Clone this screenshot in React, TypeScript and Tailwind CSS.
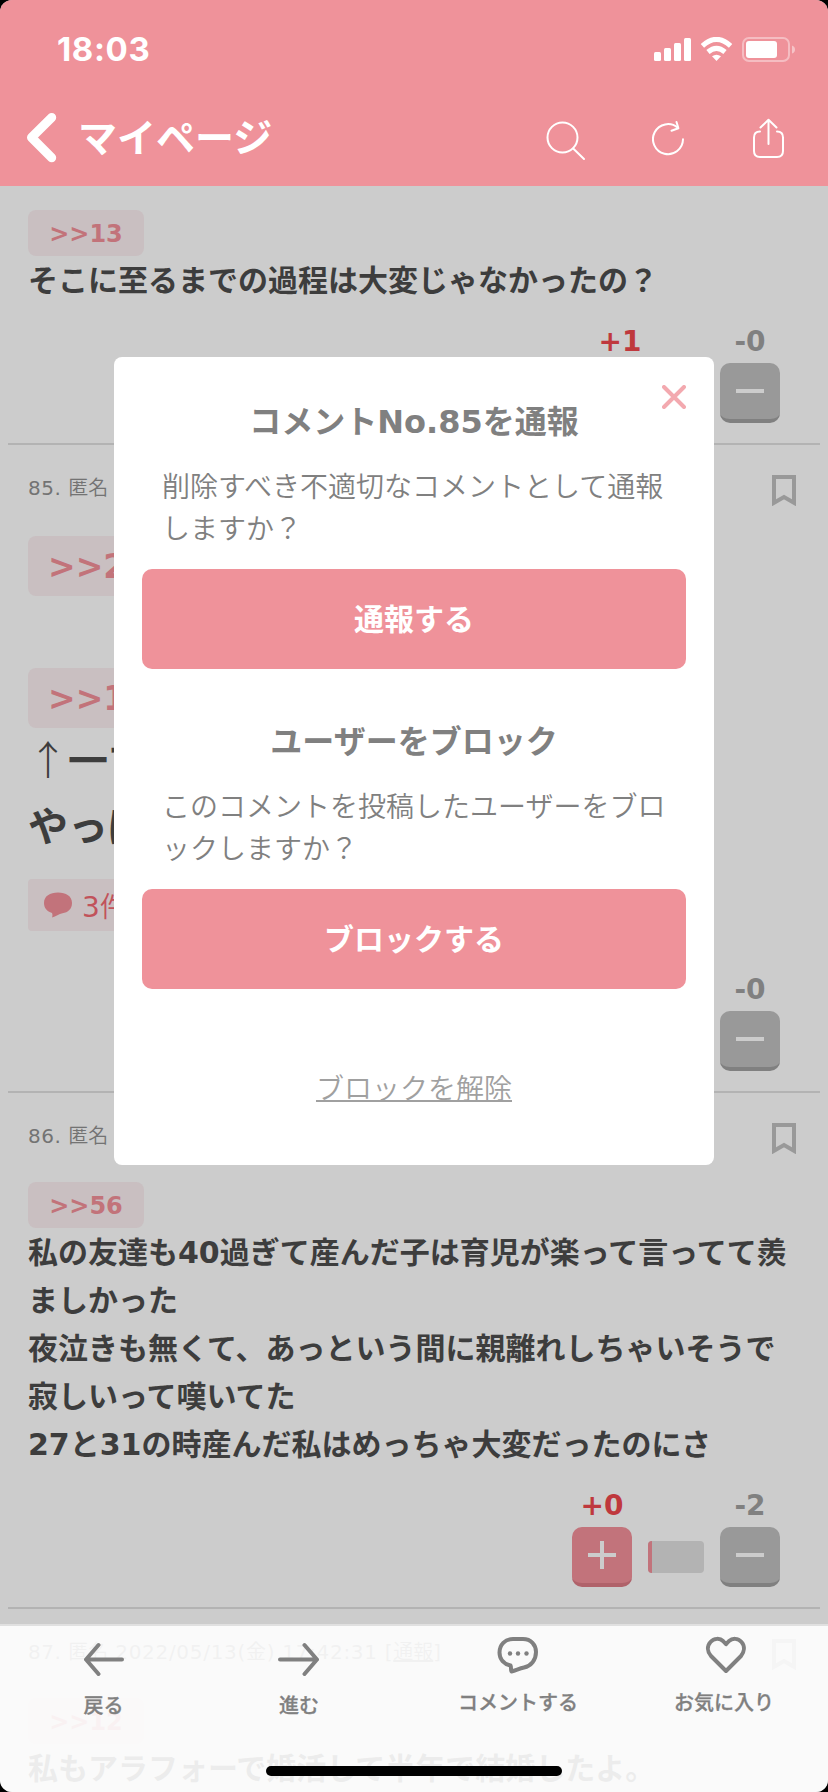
import type { ReactNode } from "react";

function StatusBar() {
  return (
    <div className="flex h-[98px] items-start justify-between pr-[33px] pl-[57px]">
      <span className="mt-[28px] font-['Inter'] text-[33px] leading-[42px] font-bold tracking-[0.6px]">18:03</span>
      <svg className="mt-[37px]" width="142" height="26" viewBox="652 37 142 26" fill="white">
        <rect x="653" y="52" width="7" height="9" rx="1.5" />
        <rect x="663" y="48" width="7" height="13" rx="1.5" />
        <rect x="673" y="43" width="7" height="18" rx="1.5" />
        <rect x="683" y="38" width="7" height="23" rx="1.5" />
        <g fill="none" stroke="white" strokeWidth="5">
          <path d="M701.4 45.8 Q715.500 33 729.600 45.800" />
          <path d="M707 52 Q715.500 44.700 724 52" />
        </g>
        <path d="M711 56.300 Q715.500 53 720 56.300 L715.500 61Z" />
        <rect x="742" y="38" width="46" height="23" rx="6" fill="none" stroke="white" strokeOpacity=".4" strokeWidth="2" />
        <rect x="745" y="41" width="31" height="17" rx="3" />
        <path d="M791 45.500 Q794 46.500 794 49.500 T791 53.500Z" fillOpacity=".45" />
      </svg>
    </div>
  );
}

function Header() {
  return (
    <header className="h-[186px] bg-[#ef929a] text-white">
      <StatusBar />
      <div className="flex h-[78px] items-center">
        <svg className="ml-[26px]" width="31" height="52" viewBox="26 111 31 52" fill="none" stroke="white" strokeWidth="9" strokeLinecap="round" strokeLinejoin="round">
          <path d="M51.700 117.500 L31.500 137.500 L51.700 157.700" />
        </svg>
        <h1 className="mt-[4px] ml-[21px] w-[440px] text-[39px] leading-[52px] font-bold">マイページ</h1>
        <svg className="mt-[6px] ml-[28px]" width="40" height="44" viewBox="546 118 40 44" fill="none" stroke="white" strokeWidth="2" strokeLinecap="round">
          <circle cx="562.500" cy="137.500" r="15" />
          <path d="M573.200 148.500 L584 159" />
        </svg>
        <svg className="mt-[6px] ml-[66px]" width="34" height="44" viewBox="652 118 34 44" fill="none" stroke="white" strokeWidth="2" strokeLinecap="round" strokeLinejoin="round">
          <path d="M683 139.300 A15 15 0 1 1 677.800 127.800" />
          <path d="M676.500 122 L678.400 128.300 L671.500 130.700" />
        </svg>
        <svg className="mt-[4px] ml-[66px]" width="34" height="44" viewBox="752 117 34 44" fill="none" stroke="white" strokeWidth="2" strokeLinecap="round" strokeLinejoin="round">
          <path d="M760 131.500 Q754 131.500 754 137.500 V151 Q754 157 760 157 H777 Q783 157 783 151 V137.500 Q783 131.500 777 131.500" />
          <path d="M768.500 144 V120 M760.500 127.500 L768.500 119.700 L776.500 127.500" />
        </svg>
      </div>
    </header>
  );
}

function Bookmark() {
  return (
    <svg className="mt-[30px]" width="24" height="31" viewBox="0 0 24 31" fill="none" stroke="#999" strokeWidth="4">
      <path d="M2 2 H22 V27.800 L12 22 L2 27.800 Z" />
    </svg>
  );
}

function Meta({ no, children }: { no: number; children?: ReactNode }) {
  return (
    <div className="flex h-[89px] items-start justify-between pr-[4px] font-normal">
      <span className="mt-[28px] text-[20px] leading-[30px] text-[#737373]">
        <span className="tracking-[0.5px]">{no}. </span>
        <span className="font-[350]">匿名</span>
        {children}
      </span>
      <Bookmark />
    </div>
  );
}

function Anchor({ children, large = false }: { children: ReactNode; large?: boolean }) {
  return (
    <div
      className={
        large
          ? "flex h-[60px] w-[170px] items-center rounded-[8px] bg-[#c9bfc1] pt-[2px] pl-[20px] text-[33px] font-bold text-[#c2737a]"
          : "flex h-[46px] w-[116px] items-center justify-center rounded-[8px] bg-[#c9bfc1] pt-[2px] text-[24px] font-bold text-[#c2737a]"
      }
    >
      {children}
    </div>
  );
}

type VotesProps = { plus: number; minus: number; narrow?: boolean };

function Votes({ plus, minus, narrow = false }: VotesProps) {
  return (
    <div className="flex h-[119px] justify-end pr-[20px] text-[28px] font-bold">
      <div className="flex w-[60px] flex-col items-center">
        <span className="mt-[18px] h-[41px] leading-[40px] text-[#bf383d]">+{plus}</span>
        <span className="flex h-[60px] w-[60px] items-start justify-center rounded-[10px] border-b-4 border-[#b0626a] bg-[#c2737b] pt-[14px]">
          <svg width="28" height="28" viewBox="0 0 28 28" stroke="#ccc" strokeWidth="4">
            <path d="M0 14 H28 M14 0 V28" />
          </svg>
        </span>
      </div>
      <div className={narrow ? "mx-4 mt-[73px] flex h-8 w-[38px] overflow-hidden rounded-[4px] bg-[#b3b3b3]" : "mx-4 mt-[73px] flex h-8 w-14 overflow-hidden rounded-[4px] bg-[#b3b3b3]"}>
        <span className="w-1 bg-[#c2737b]" />
      </div>
      <div className="flex w-[60px] flex-col items-center">
        <span className="mt-[18px] h-[41px] leading-[40px] text-[#808080]">-{minus}</span>
        <span className="flex h-[60px] w-[60px] items-start justify-center rounded-[10px] border-b-4 border-[#808080] bg-[#999] pt-[14px]">
          <svg width="28" height="28" viewBox="0 0 28 28" stroke="#ccc" strokeWidth="4">
            <path d="M0 14 H28" />
          </svg>
        </span>
      </div>
    </div>
  );
}

function Comment({ children, last = false }: { children: ReactNode; last?: boolean }) {
  return (
    <article className={last ? "mx-2 px-5" : "mx-2 border-b-2 border-[#b3b3b3] px-5 pb-5"}>{children}</article>
  );
}

function Thread() {
  return (
    <main className="pt-[24px] text-[30px] leading-[48px] font-bold text-[#3d3d3d]">
      <Comment>
        <Anchor>&gt;&gt;13</Anchor>
        <p className="-mb-px pt-px">そこに至るまでの過程は大変じゃなかったの？</p>
        <Votes plus={1} minus={0} narrow />
      </Comment>
      <Comment>
        <Meta no={85} />
        <div className="pt-[2px]">
          <Anchor large>&gt;&gt;2</Anchor>
        </div>
        <div className="pt-[72px]">
          <Anchor large>&gt;&gt;1</Anchor>
        </div>
        <p className="h-[132px] text-[40px] leading-[66px]">
          <span className="font-['Noto_Sans_CJK_JP'] leading-none font-light">↑</span>一す
          <br />
          やっぱ
        </p>
        <div className="mt-[19px] flex h-[52px] w-[150px] items-center rounded-[4px] bg-[#c9bfc1] pl-[16px] text-[28px] font-normal text-[#c1525a]">
          <svg width="28" height="26" viewBox="0 0 28 26" fill="#c2737b">
            <path d="M14 0.500 C22 0.500 28 4 28 11 C28 17 24 20.500 18.500 21.300 C15 22 12 24.500 8 25.500 C8.500 24 8.700 22.500 8 21 C3 19.500 0 16 0 11 C0 4 6 .500 14 .500Z" />
          </svg>
          <span className="mt-[5px] ml-[10px]">
            3<span className="font-[350]">件</span>
          </span>
        </div>
        <div className="pt-[21px]">
          <Votes plus={1} minus={0} />
        </div>
      </Comment>
      <Comment>
        <Meta no={86} />
        <Anchor>&gt;&gt;56</Anchor>
        <p className="-mb-px pt-px">
          私の友達も40過ぎて産んだ子は育児が楽って言ってて羨
          <br />
          ましかった
          <br />
          夜泣きも無くて、あっという間に親離れしちゃいそうで
          <br />
          寂しいって嘆いてた
          <br />
          27と31の時産んだ私はめっちゃ大変だったのにさ
        </p>
        <Votes plus={0} minus={2} />
      </Comment>
      <Comment last>
        <Meta no={87}>
          <span className="tracking-[0.7px]"> 2022/05/13(金) 17:42:31 [</span>
          <span className="font-[350] underline">通報</span>]
        </Meta>
        <Anchor>&gt;&gt;12</Anchor>
        <p className="pt-px">私もアラフォーで婚活して半年で結婚したよ。</p>
      </Comment>
    </main>
  );
}

function Dialog() {
  return (
    <section className="absolute top-[357px] left-[114px] flex h-[808px] w-[600px] flex-col rounded-[8px] bg-white px-7 pt-[41px] text-[#808080]">
      <svg className="absolute top-[28px] left-[548px]" width="24" height="24" viewBox="0 0 24 24" stroke="#f3a9af" strokeWidth="4" strokeLinecap="round">
        <path d="M2 2 L22 22 M22 2 L2 22" />
      </svg>
      <h2 className="text-center text-[32px] leading-[48px] font-bold">コメントNo.85を通報</h2>
      <p className="mt-[21px] px-5 text-[28px] leading-[42px] font-[350]">
        削除すべき不適切なコメントとして通報
        <br />
        しますか？
      </p>
      <button className="mt-[18px] h-[100px] rounded-[10px] bg-[#ef929a] pt-[1px] text-[30px] font-bold text-white">通報する</button>
      <h2 className="mt-[49px] text-center text-[32px] leading-[48px] font-bold">ユーザーをブロック</h2>
      <p className="mt-[21px] px-5 text-[28px] leading-[42px] font-[350]">
        このコメントを投稿したユーザーをブロ
        <br />
        ックしますか？
      </p>
      <button className="mt-[18px] h-[100px] rounded-[10px] bg-[#ef929a] pt-[1px] text-[30px] font-bold text-white">ブロックする</button>
      <a className="mt-[80px] text-center text-[28px] leading-[42px] font-[350] text-[#a0a0a0] underline decoration-2">ブロックを解除</a>
    </section>
  );
}

function TabBar() {
  return (
    <nav className="absolute bottom-0 left-0 flex h-[166px] w-full bg-white/90 text-[20px] leading-[30px] font-medium text-[#808080] shadow-[0_-2px_0_rgba(255,255,255,0.4)] [-webkit-text-stroke:0.3px_#808080]">
      <div className="flex w-[207px] flex-col items-center pt-[16px]">
        <svg width="42" height="34" viewBox="0 0 42 34" fill="none" stroke="#808080" strokeWidth="4" strokeLinecap="round" strokeLinejoin="round">
          <path d="M39 17.500 H3 M15.500 3 L3 17.500 L15.500 32" />
        </svg>
        <span className="mt-[15px]">戻る</span>
      </div>
      <div className="flex w-[184px] flex-col items-center pt-[16px]">
        <svg width="42" height="34" viewBox="0 0 42 34" fill="none" stroke="#808080" strokeWidth="4" strokeLinecap="round" strokeLinejoin="round">
          <path d="M2 17.500 H39 M26.500 3 L39 17.500 L26.500 32" />
        </svg>
        <span className="mt-[15px]">進む</span>
      </div>
      <div className="flex w-[254px] flex-col items-center pt-[10px]">
        <svg width="42" height="38" viewBox="0 0 42 38" fill="none" stroke="#808080" strokeWidth="4" strokeLinejoin="round">
          <path d="M16 3 H26 C34 3 39 9 39 16 C39 24 34 30 27 31.500 C22 32.500 19 34.500 14.500 35.500 C13.500 34 14.500 31.500 13.500 29.500 C7 28 2.500 23.500 2.500 16.500 C2.500 9 8 3 16 3Z" />
          <g fill="#808080" stroke="none">
            <circle cx="13" cy="17.500" r="2.200" />
            <circle cx="21" cy="17.500" r="2.200" />
            <circle cx="29.500" cy="17.500" r="2.200" />
          </g>
        </svg>
        <span className="mt-[14px]">コメントする</span>
      </div>
      <div className="flex w-[158px] flex-col items-center pt-[10px]">
        <svg className="ml-[4px]" width="42" height="38" viewBox="0 0 42 38" fill="none" stroke="#808080" strokeWidth="4" strokeLinejoin="round">
          <path d="M21 35 L6 20 C2 15.500 2 10 5.500 6 C9 2 15 2 18 5 L21 8.200 L24 5 C27.500 2 33 2 36.500 6 C40 10 39.500 15.500 36 20 Z" />
        </svg>
        <span className="mt-[14px]">お気に入り</span>
      </div>
      <div className="absolute bottom-[16px] left-[266px] h-[10px] w-[296px] rounded-full bg-black" />
    </nav>
  );
}

export default function App() {
  return (
    <div className="h-[1792px] w-[828px] bg-black font-['DejaVu_Sans','Noto_Sans_CJK_JP',sans-serif]">
      <div className="relative h-[1792px] overflow-hidden rounded-[12px] bg-[#ccc] whitespace-nowrap">
        <Header />
        <Thread />
        <Dialog />
        <TabBar />
      </div>
    </div>
  );
}
